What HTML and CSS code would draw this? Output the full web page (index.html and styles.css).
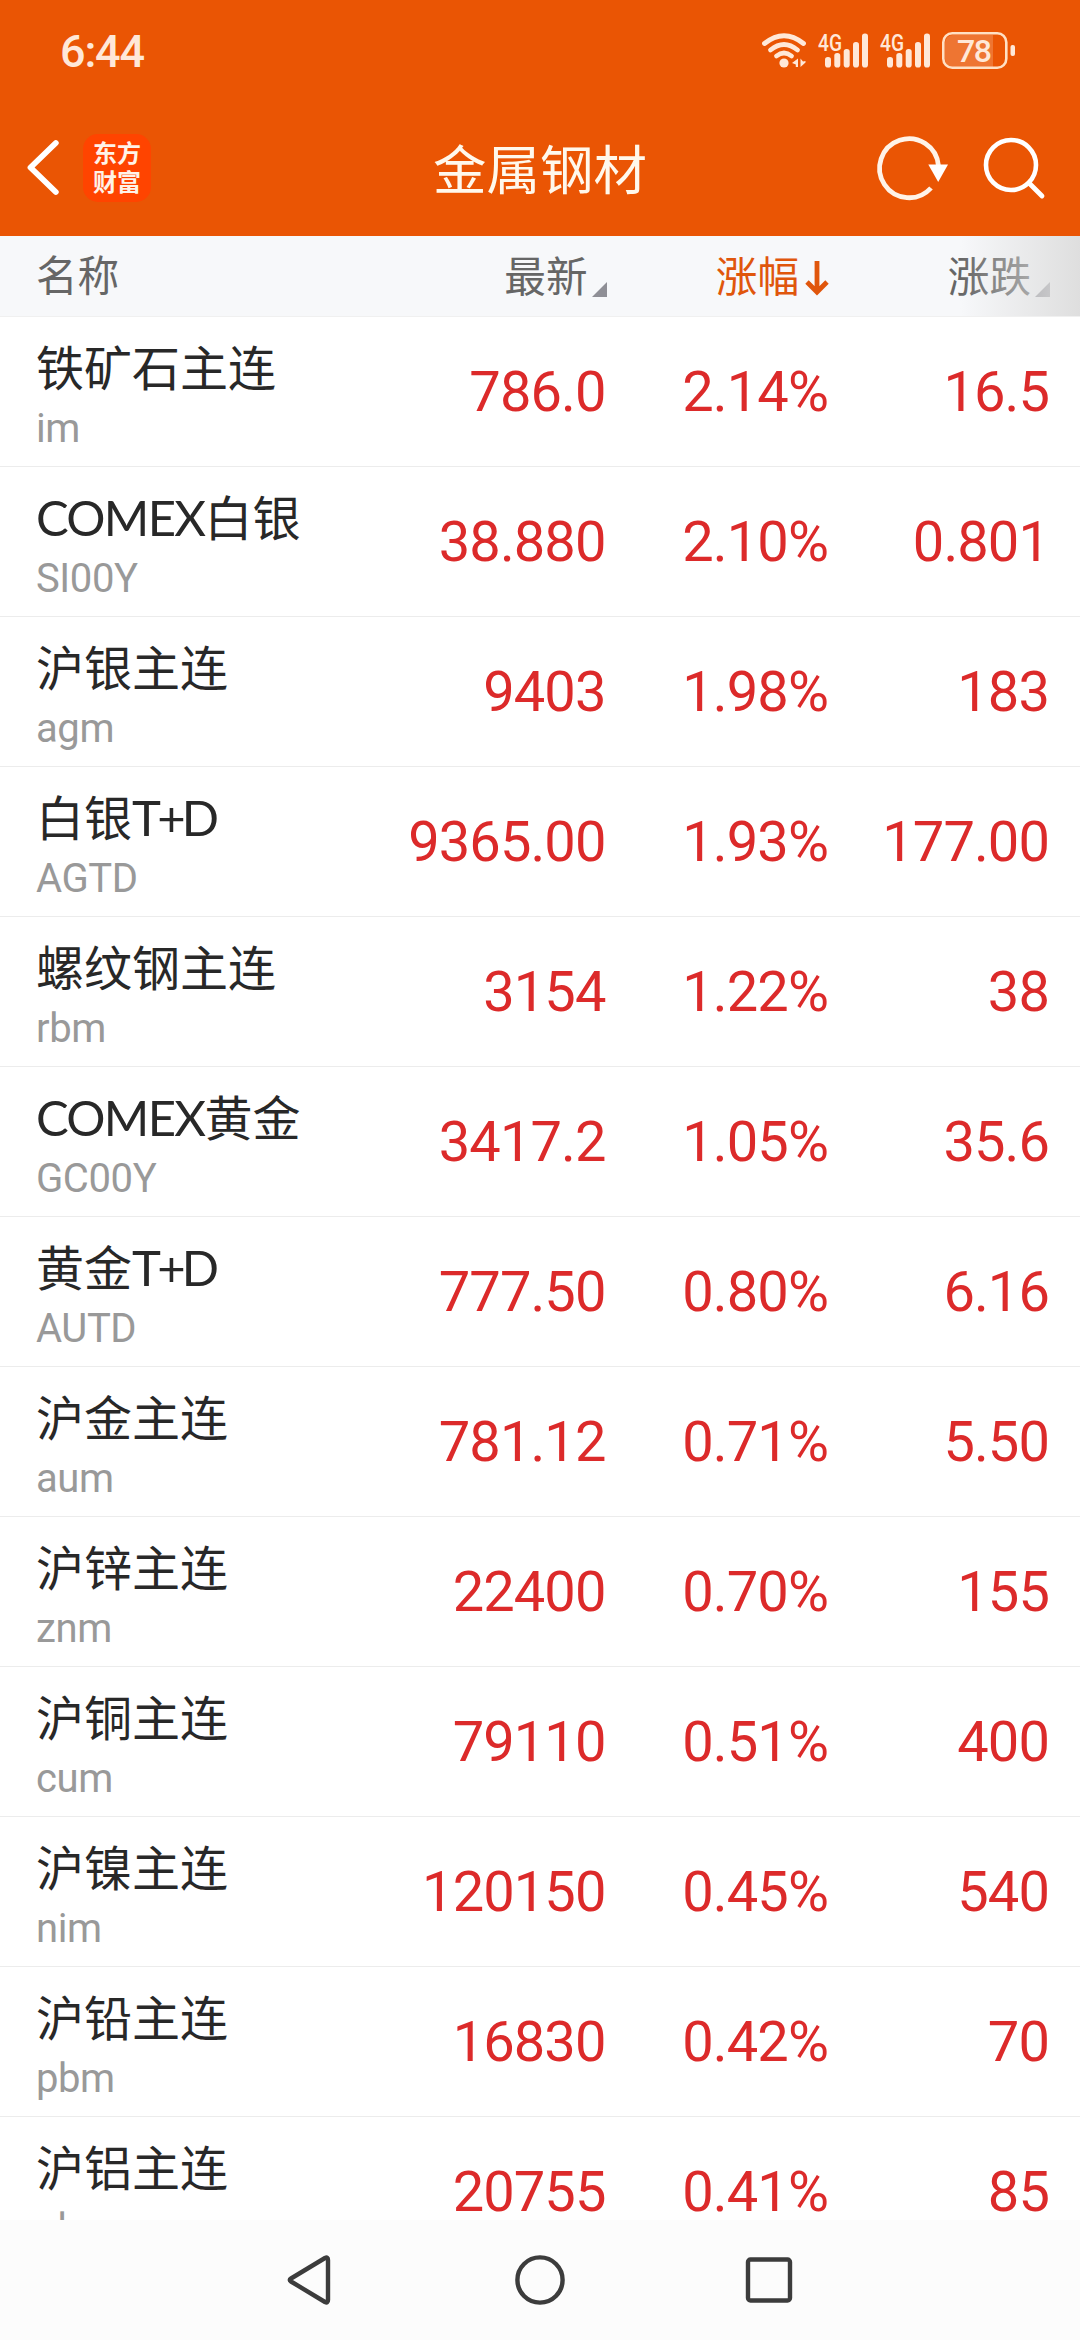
FILE: index.html
```html
<!DOCTYPE html>
<html lang="zh-CN">
<head>
<meta charset="utf-8">
<title>金属钢材</title>
<link rel="stylesheet" href="styles.css">
</head>
<body>
<div class="screen">
  <header class="top">
    <div class="status">
      <span class="time">6:44</span>
      <svg class="status-icons" width="260" height="50" viewBox="760 25 260 50">
        <g fill="none" stroke="#ffe8d8" stroke-width="4.8" stroke-linecap="round">
          <path d="M764.5 43.5Q784 28 803.5 43.5"/>
          <path d="M770.5 50Q784 39 797.500 50"/>
          <path d="M776.500 56Q784 50 791.500 56"/>
        </g>
        <g fill="#ffe8d8">
          <circle cx="784" cy="63" r="4.600"/>
          <path d="M798 58.500v8.500h-2.200v-2.500l-3.800-1.500z M800.500 58.500v8.500l5-4.500v-1.500l-2.500.5z"/>
          <text class="net" x="818" y="50.500" textLength="24" lengthAdjust="spacingAndGlyphs">4G</text>
          <rect x="825" y="57" width="6" height="10.500" rx="2.800"/>
          <rect x="834.300" y="53" width="6" height="14.500" rx="2.800"/>
          <rect x="843.700" y="49" width="6" height="18.500" rx="2.800"/>
          <rect x="853" y="42" width="6" height="25.500" rx="2.800"/>
          <rect x="862" y="33.500" width="6" height="34" rx="2.800"/>
          <text class="net" x="880" y="50.500" textLength="24" lengthAdjust="spacingAndGlyphs">4G</text>
          <rect x="887" y="57" width="6" height="10.500" rx="2.800"/>
          <rect x="896.300" y="53" width="6" height="14.500" rx="2.800"/>
          <rect x="905.700" y="49" width="6" height="18.500" rx="2.800"/>
          <rect x="915" y="42" width="6" height="25.500" rx="2.800"/>
          <rect x="924" y="33.500" width="6" height="34" rx="2.800"/>
          <path d="M993 35v32H953a8 8 0 0 1-8-8V43a8 8 0 0 1 8-8z" opacity=".22"/>
          <rect x="1010.500" y="45" width="4.500" height="11" rx="2"/>
          <text class="level" x="957" y="62" textLength="35">78</text>
        </g>
        <rect x="943.300" y="33.300" width="63" height="34.500" rx="9" fill="none" stroke="#ffe0c4" stroke-width="2.600"/>
      </svg>
    </div>
    <div class="titlebar">
      <div class="left">
        <svg width="40" height="64" viewBox="22 137 40 64"><path d="M55.800 144L30.500 168.500L55.800 193" fill="none" stroke="#fff" stroke-width="5.800" stroke-linecap="round" stroke-linejoin="round"/></svg>
        <div class="logo"><span>东方</span><span>财富</span></div>
      </div>
      <h1 class="title">金属钢材</h1>
      <svg class="actions" width="180" height="80" viewBox="870 128 180 80">
        <path d="M938.500 166A29.500 29.500 0 1 0 931 188" fill="none" stroke="#fff3e8" stroke-width="4.800"/>
        <path d="M928.300 164.500H948L938.200 182z" fill="#fff"/>
        <circle cx="1011" cy="165" r="25" fill="none" stroke="#fff" stroke-width="4.600"/>
        <path d="M1029.500 183.500L1042 196" stroke="#fff" stroke-width="4.800" stroke-linecap="round"/>
      </svg>
    </div>
  </header>

  <div class="heads">
    <span class="h-name">名称</span>
    <span class="h">最新<svg class="tri" width="15" height="15"><path d="M15 0V15H0z" fill="#8f8f96"/></svg></span>
    <span class="h active">涨幅<svg class="down" width="24" height="36" viewBox="0 0 24 36"><path d="M12 1V31M2 22L12 32L22 22" fill="none" stroke="#e0560c" stroke-width="4.800"/></svg></span>
    <span class="h">涨跌<svg class="tri" width="15" height="15"><path d="M15 0V15H0z" fill="#8f8f96"/></svg></span>
  </div>

  <main class="list">
    <div class="row"><div><div class="name">铁矿石主连</div><div class="code">im</div></div><b>786.0</b><b>2.14%</b><b>16.5</b></div>
    <div class="row"><div><div class="name"><span class="lat">COMEX</span>白银</div><div class="code">SI00Y</div></div><b>38.880</b><b>2.10%</b><b>0.801</b></div>
    <div class="row"><div><div class="name">沪银主连</div><div class="code">agm</div></div><b>9403</b><b>1.98%</b><b>183</b></div>
    <div class="row"><div><div class="name">白银<span class="lat td">T+D</span></div><div class="code">AGTD</div></div><b>9365.00</b><b>1.93%</b><b>177.00</b></div>
    <div class="row"><div><div class="name">螺纹钢主连</div><div class="code">rbm</div></div><b>3154</b><b>1.22%</b><b>38</b></div>
    <div class="row"><div><div class="name"><span class="lat">COMEX</span>黄金</div><div class="code">GC00Y</div></div><b>3417.2</b><b>1.05%</b><b>35.6</b></div>
    <div class="row"><div><div class="name">黄金<span class="lat td">T+D</span></div><div class="code">AUTD</div></div><b>777.50</b><b>0.80%</b><b>6.16</b></div>
    <div class="row"><div><div class="name">沪金主连</div><div class="code">aum</div></div><b>781.12</b><b>0.71%</b><b>5.50</b></div>
    <div class="row"><div><div class="name">沪锌主连</div><div class="code">znm</div></div><b>22400</b><b>0.70%</b><b>155</b></div>
    <div class="row"><div><div class="name">沪铜主连</div><div class="code">cum</div></div><b>79110</b><b>0.51%</b><b>400</b></div>
    <div class="row"><div><div class="name">沪镍主连</div><div class="code">nim</div></div><b>120150</b><b>0.45%</b><b>540</b></div>
    <div class="row"><div><div class="name">沪铅主连</div><div class="code">pbm</div></div><b>16830</b><b>0.42%</b><b>70</b></div>
    <div class="row"><div><div class="name">沪铝主连</div><div class="code">alm</div></div><b>20755</b><b>0.41%</b><b>85</b></div>
  </main>

  <nav class="nav">
    <svg width="520" height="60" viewBox="280 2250 520 60" fill="none" stroke="#3c3c3c" stroke-width="4.400" stroke-linejoin="round">
      <path d="M291 2278.500L325 2258Q328 2256.500 328 2260V2300Q328 2303.500 325 2302L291 2281.500Q288.500 2280 291 2278.500z"/>
      <circle cx="540" cy="2280" r="22.600"/>
      <rect x="748" y="2259.500" width="42" height="41" rx="2.500"/>
    </svg>
  </nav>
</div>
</body>
</html>
```
FILE: styles.css
```css
* { box-sizing: border-box; }
body { margin: 0; background: #fff; font-family: "Noto Sans CJK SC", sans-serif; }
svg { display: block; flex: none; }

.screen { width: 1080px; height: 2340px; display: flex; flex-direction: column; overflow: hidden; }

.top { height: 236px; flex: none; background: #ea5504; }
.status { height: 100px; padding: 0 60px; display: flex; align-items: center; justify-content: space-between; }
.time { padding-top: 3px; font: 500 45px/50px Roboto, sans-serif; letter-spacing: -1.2px; color: #ffe8d8; }
.net { font: 500 23px Roboto, sans-serif; }
.level { font: 500 32px Roboto, sans-serif; }

.titlebar { height: 136px; padding: 0 30px 0 22px; display: grid; grid-template-columns: 412px 1fr 412px; align-items: center; }
.left { display: flex; align-items: center; gap: 21px; }
.logo { width: 68px; height: 68px; padding-top: 3px; border-radius: 15px; background: #ff4400; color: #fff3e8; display: flex; flex-direction: column; align-items: center; }
.logo span { font-size: 24px; line-height: 29px; font-weight: 700; }
.title { margin: 0 -10px -0px -1px; padding-bottom: 3px; font-size: 53.500px; line-height: 64px; font-weight: 400; color: #fff8ec; white-space: nowrap; }
.actions { justify-self: end; }

.heads, .row { display: grid; grid-template-columns: 300px 269.500px 222.500px 221px; padding: 0 31px 0 36px; }

.heads { position: relative; height: 81px; flex: none; align-items: center; background: #f7f8fa; border-bottom: 1px solid #f0f0f0; color: #666; font-size: 41.600px; line-height: 60px; }
.heads::after { content: ""; position: absolute; top: 0; right: 0; bottom: 0; width: 120px; background: linear-gradient(90deg, rgba(221,221,221,0), rgba(221,221,221,.55) 58%, rgba(221,221,221,.95)); }
.h-name { padding-bottom: 7px; }
.h { padding-bottom: 4px; display: flex; justify-content: flex-end; align-items: center; }
.tri { margin: 31px -1px 0 4px; }
.down { margin: 8px -1px 0 6px; }
.active { color: #e0560c; }

.list { flex: 1; min-height: 0; overflow: hidden; }
.row { height: 150px; border-bottom: 1px solid #ececec; }
.name { margin-top: 20px; height: 56px; line-height: 56px; font-size: 48px; color: #282828; white-space: nowrap; }
.lat { font-family: Lato, sans-serif; font-size: 49px; line-height: 0; letter-spacing: -1.700px; }
.td { letter-spacing: -3.800px; }
.code { margin-top: 12px; font: 400 40px/48px Roboto, sans-serif; letter-spacing: -.4px; color: #999; }
.row b { align-self: center; justify-self: end; font: 400 56px/66px Roboto, sans-serif; letter-spacing: -.9px; color: #dc2a2a; }

.nav { height: 120px; flex: none; display: flex; align-items: center; justify-content: center; background: #fcfcfc; }
```
